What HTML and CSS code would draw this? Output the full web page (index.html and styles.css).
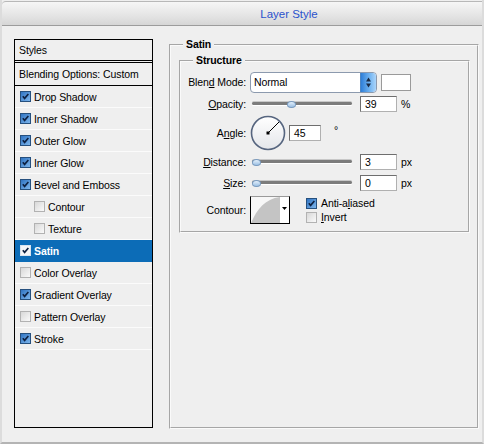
FILE: index.html
```html
<!DOCTYPE html>
<html>
<head>
<meta charset="utf-8">
<link rel="stylesheet" href="styles.css">
</head>
<body>
<div class="window">
  <div class="titlebar"><span class="title">Layer Style</span></div>
  <div class="main">
    <div class="styles-list">
      <div class="item header">Styles</div>
      <div class="item blend">Blending Options: Custom</div>
      <div class="item"><span class="cb on"><svg viewBox="0 0 11 11"><path d="M2.2 5.2 L4.4 7.8 L9 2.4"/></svg></span>Drop Shadow</div>
      <div class="item"><span class="cb on"><svg viewBox="0 0 11 11"><path d="M2.2 5.2 L4.4 7.8 L9 2.4"/></svg></span>Inner Shadow</div>
      <div class="item"><span class="cb on"><svg viewBox="0 0 11 11"><path d="M2.2 5.2 L4.4 7.8 L9 2.4"/></svg></span>Outer Glow</div>
      <div class="item"><span class="cb on"><svg viewBox="0 0 11 11"><path d="M2.2 5.2 L4.4 7.8 L9 2.4"/></svg></span>Inner Glow</div>
      <div class="item"><span class="cb on"><svg viewBox="0 0 11 11"><path d="M2.2 5.2 L4.4 7.8 L9 2.4"/></svg></span>Bevel and Emboss</div>
      <div class="item sub"><span class="cb"></span>Contour</div>
      <div class="item sub"><span class="cb"></span>Texture</div>
      <div class="item selected"><span class="cb sel"><svg viewBox="0 0 11 11"><path d="M2.2 5.2 L4.4 7.8 L9 2.4"/></svg></span>Satin</div>
      <div class="item"><span class="cb"></span>Color Overlay</div>
      <div class="item"><span class="cb on"><svg viewBox="0 0 11 11"><path d="M2.2 5.2 L4.4 7.8 L9 2.4"/></svg></span>Gradient Overlay</div>
      <div class="item"><span class="cb"></span>Pattern Overlay</div>
      <div class="item"><span class="cb on"><svg viewBox="0 0 11 11"><path d="M2.2 5.2 L4.4 7.8 L9 2.4"/></svg></span>Stroke</div>
    </div>

    <fieldset class="group outer">
      <legend>Satin</legend>
      <fieldset class="group inner">
        <legend>Structure</legend>

        <div class="row r-blend">
          <span class="label">Blen<u>d</u> Mode:</span>
          <div class="ctrl">
            <div class="select">
              <span class="select-text">Normal</span>
              <span class="select-btn"><svg viewBox="0 0 15 19" width="15" height="19"><path d="M7.5 4.5 L10 8.5 L5 8.5 Z M7.5 14.5 L10 10.5 L5 10.5 Z" fill="#1a2a44"/></svg></span>
            </div>
            <span class="swatch"></span>
          </div>
        </div>

        <div class="row r-opacity">
          <span class="label"><u>O</u>pacity:</span>
          <div class="ctrl">
            <div class="slider"><span class="track"></span><span class="thumb t-op"></span></div>
            <span class="input">39</span>
            <span class="unit">%</span>
          </div>
        </div>

        <div class="row r-angle">
          <span class="label">A<u>n</u>gle:</span>
          <div class="ctrl">
            <svg class="dial" viewBox="0 0 36 36" width="36" height="36">
              <defs>
                <linearGradient id="dg" x1="0" y1="0" x2="0" y2="1">
                  <stop offset="0" stop-color="#ffffff"/>
                  <stop offset="1" stop-color="#e4e6ea"/>
                </linearGradient>
              </defs>
              <circle cx="18" cy="18" r="16.5" fill="url(#dg)" stroke="#56657f" stroke-width="1.6"/>
              <line x1="18" y1="18" x2="29" y2="7" stroke="#000" stroke-width="1"/>
              <rect x="16.5" y="16.5" width="3" height="3" fill="#000"/>
            </svg>
            <span class="input angle-in">45</span>
            <span class="unit deg">°</span>
          </div>
        </div>

        <div class="row r-dist">
          <span class="label"><u>D</u>istance:</span>
          <div class="ctrl">
            <div class="slider"><span class="track"></span><span class="thumb t-min"></span></div>
            <span class="input">3</span>
            <span class="unit">px</span>
          </div>
        </div>

        <div class="row r-size">
          <span class="label"><u>S</u>ize:</span>
          <div class="ctrl">
            <div class="slider"><span class="track"></span><span class="thumb t-min"></span></div>
            <span class="input">0</span>
            <span class="unit">px</span>
          </div>
        </div>

        <div class="row r-contour">
          <span class="label">Contour:</span>
          <div class="ctrl">
            <div class="contour">
              <svg class="curve" viewBox="0 0 29 26" width="29" height="26"><path d="M0 26 C6 12 14 2 29 0 L29 26 Z" fill="#c4c4c4"/></svg>
              <span class="dd"><svg viewBox="0 0 9 26" width="9" height="26"><path d="M2 10 L7 10 L4.5 13 Z" fill="#000"/></svg></span>
            </div>
            <div class="checks">
              <label class="chk"><span class="cb on"><svg viewBox="0 0 11 11"><path d="M2.2 5.2 L4.4 7.8 L9 2.4"/></svg></span>Anti-a<u>l</u>iased</label>
              <label class="chk"><span class="cb"></span><u>I</u>nvert</label>
            </div>
          </div>
        </div>
      </fieldset>
    </fieldset>
  </div>
</div>
</body>
</html>
```

FILE: styles.css
```css
html, body {
  margin: 0;
  padding: 0;
}
body {
  width: 484px;
  height: 444px;
  overflow: hidden;
  background: #efefef;
  font-family: "Liberation Sans", Arial, sans-serif;
  font-size: 10.5px;
  letter-spacing: -0.1px;
  color: #000;
}
.window {
  width: 484px;
  height: 444px;
  box-sizing: border-box;
  border-left: 2px solid #dcdcdc;
  border-right: 2px solid #dcdcdc;
  border-bottom: 2px solid #b4b4b4;
  background: #efefef;
  display: flex;
  flex-direction: column;
}
.titlebar {
  height: 25px;
  box-sizing: border-box;
  border-top: 1px solid #b8b8b8;
  border-bottom: 1px solid #9c9c9c;
  border-radius: 4px 0 0 0;
  margin-top: 1px;
  background: linear-gradient(#f6f6f6, #e4e4e4 60%, #d6d6d6);
  display: flex;
  align-items: center;
  justify-content: center;
  padding-left: 94px;
}
.title {
  color: #2b52cc;
  font-size: 11.5px;
  letter-spacing: 0;
  margin-top: 1px;
}
.main {
  display: flex;
  align-items: flex-start;
  padding-top: 13px;
}

/* left list */
.styles-list {
  margin-left: 12px;
  width: 139px;
  height: 389px;
  box-sizing: border-box;
  border: 1px solid #000;
  display: flex;
  flex-direction: column;
}
.item {
  height: 22px;
  box-sizing: border-box;
  border-bottom: 1px solid #fbfbfb;
  display: flex;
  align-items: center;
  padding-left: 5px;
  white-space: nowrap;
}
.item.header {
  padding-left: 4px;
  height: 23px;
  border-bottom: 3px double #000;
}
.item.blend {
  padding-left: 4px;
  height: 23px;
  border-bottom: 1px solid #000;
}
.item.sub {
  padding-left: 19px;
}
.item.selected {
  background: #0c6cb7;
  color: #fff;
  font-weight: bold;
  border-bottom-color: #0c6cb7;
}
.cb {
  width: 11px;
  height: 11px;
  box-sizing: border-box;
  border: 1px solid #b2b2b2;
  background: linear-gradient(135deg, #d8d8d8, #fafafa);
  margin-right: 3px;
  flex: none;
  display: inline-flex;
}
.cb svg {
  width: 9px;
  height: 9px;
}
.cb path {
  fill: none;
  stroke: #0d2142;
  stroke-width: 2;
}
.cb.on {
  border-color: #26507e;
  background: linear-gradient(135deg, #2f73c2, #7eb6ec);
}
.cb.sel {
  border-color: #d8e4f0;
  background: #f4f6f8;
}

/* group boxes */
.group {
  margin: 0;
  padding: 0;
  border: 2px groove #fafafa;
  box-sizing: border-box;
}
.group legend {
  font-weight: bold;
  padding: 0 3px;
  margin-left: 12px;
  line-height: 13px;
}
.outer {
  margin-left: 16px;
  margin-top: -1px;
  width: 310px;
  height: 391px;
}
.inner {
  margin-left: 8px;
  margin-top: 3px;
  width: 291px;
  padding: 4px 0 4px 0;
}

.row {
  display: flex;
  align-items: center;
}
.label {
  width: 65px;
  text-align: right;
  flex: none;
  white-space: nowrap;
}
.ctrl {
  margin-left: 4px;
  display: flex;
  align-items: center;
}
.r-blend { height: 22px; }
.r-opacity { height: 21px; }
.r-angle { height: 37px; }
.r-dist { height: 21px; }
.r-size { height: 21px; }
.r-contour { height: 34px; }

.select {
  width: 127px;
  height: 21px;
  box-sizing: border-box;
  border: 1px solid #8c9aae;
  border-radius: 4px;
  background: #fff;
  display: flex;
  align-items: center;
  overflow: hidden;
}
.select-text {
  flex: 1;
  padding-left: 3px;
}
.select-btn {
  width: 15px;
  height: 19px;
  background: linear-gradient(90deg, #2f7fd8, #6fb2f0 55%, #aad4fa);
  border-left: 1px solid #4d86c4;
  border-radius: 0 3px 3px 0;
  display: flex;
}
.swatch {
  width: 30px;
  height: 17px;
  box-sizing: border-box;
  border: 1px solid #9a9a9a;
  background: #fff;
  margin-left: 4px;
}

.slider {
  position: relative;
  width: 104px;
  height: 12px;
}
.track {
  position: absolute;
  left: 2px;
  right: 2px;
  top: 4px;
  height: 3px;
  border-radius: 2px;
  background: #7c7c7c;
  box-shadow: 0 1px 0 #ffffff, 0 -1px 0 #c8c8c8;
}
.thumb {
  position: absolute;
  top: 3px;
  width: 9px;
  height: 7px;
  box-sizing: border-box;
  border: 1px solid #7b9cc0;
  border-radius: 50% 50% 45% 45%;
  background: linear-gradient(#e4f0fb, #9cc0e4);
}
.t-op { left: 37px; }
.t-min { left: 2px; }

.input {
  width: 37px;
  height: 16px;
  box-sizing: border-box;
  border: 1px solid #6e6e6e;
  border-right-color: #b0b0b0;
  border-bottom-color: #b0b0b0;
  background: #fff;
  padding-left: 4px;
  line-height: 14px;
  margin-left: 6px;
}
.unit {
  margin-left: 4px;
}
.dial {
  display: block;
}
.angle-in {
  width: 32px;
  margin-left: 3px;
}
.deg {
  margin-left: 13px;
  margin-top: -6px;
}

.contour {
  width: 40px;
  height: 28px;
  box-sizing: border-box;
  border: 1px solid #000;
  border-top-color: #9a9a9a;
  background: #f7f7f7;
  display: flex;
}
.curve {
  display: block;
}
.dd {
  width: 9px;
  height: 26px;
  background: #fff;
  display: flex;
}
.checks {
  margin-left: 16px;
  display: flex;
  flex-direction: column;
  gap: 3px;
}
.chk {
  display: flex;
  align-items: center;
  height: 11px;
}
.chk .cb {
  margin-right: 4px;
}
```
